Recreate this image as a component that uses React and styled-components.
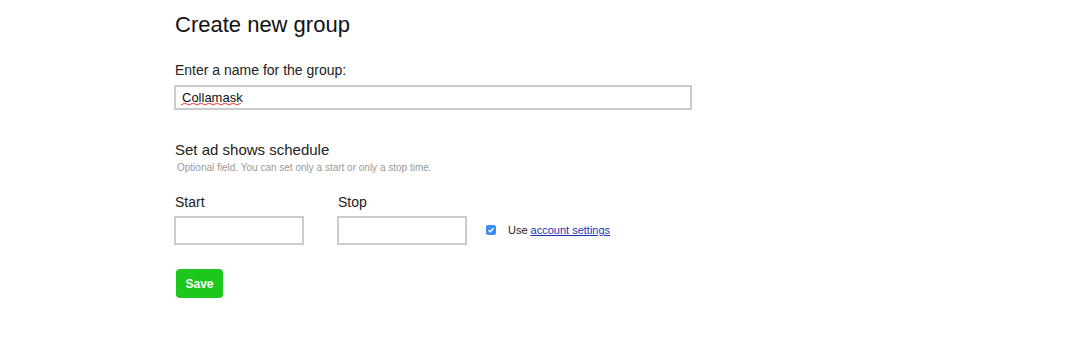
import React from "react";
import styled, { createGlobalStyle } from "styled-components";

const GlobalStyle = createGlobalStyle`
    body {
        margin: 0;
        background: #fff;
        font-family: "Liberation Sans", Arial, sans-serif;
        color: #222;
    }
`;

const Page = styled.div`
    padding: 13px 0 0 175px;
    width: 1080px;
    height: 343px;
    box-sizing: border-box;
`;

const Title = styled.h1`
    margin: 0;
    font-size: 22px;
    line-height: 24px;
    font-weight: normal;
    color: #111;
`;

const Label = styled.label`
    display: block;
    font-size: ${props => props.size || 14}px;
    line-height: 16px;
    color: #222;
`;

const NameField = styled.div`
    margin-top: 25px;
    display: flex;
    flex-direction: column;
    gap: 7px;
`;

const InputWrap = styled.div`
    position: relative;
    width: fit-content;
`;

const TextInput = styled.input`
    box-sizing: border-box;
    width: ${props => props.width}px;
    height: ${props => props.height}px;
    margin-left: -1px;
    border: 2px solid #cbcbcb;
    padding: 0 6px;
    font-family: "Liberation Sans", Arial, sans-serif;
    font-size: 13px;
    color: #111;
    outline: none;
`;

const SpellMark = styled.svg`
    position: absolute;
    left: 6px;
    top: 18px;
    pointer-events: none;
`;

const Section = styled.div`
    margin-top: 32px;
`;

const Hint = styled.div`
    margin: 4px 0 0 2px;
    font-size: 10px;
    color: #999;
`;

const TimeRow = styled.div`
    margin-top: 21px;
    display: flex;
    align-items: flex-end;
    gap: 34px;
`;

const TimeField = styled.div`
    display: flex;
    flex-direction: column;
    gap: 6px;
`;

const CheckRow = styled.label`
    display: flex;
    align-items: center;
    gap: 12px;
    margin: 0 0 9px -15px;
    font-size: 11px;
    color: #222;
`;

const Check = styled.span`
    width: 10px;
    height: 10px;
    border-radius: 2px;
    background: #3a8ff0;
    display: flex;
    align-items: center;
    justify-content: center;
`;

const Link = styled.a`
    color: #1a33b5;
    text-decoration: underline;
    margin-left: 3px;
`;

const SaveButton = styled.button`
    margin-top: 24px;
    margin-left: 1px;
    width: 47px;
    height: 29px;
    border: none;
    border-radius: 4px;
    background: #1dc71d;
    color: #fff;
    font-family: "Liberation Sans", Arial, sans-serif;
    font-weight: bold;
    font-size: 12px;
    cursor: pointer;
`;

const wave = Array.from({ length: 16 }, (_, i) => `${i * 4},${i % 2 ? 0 : 2}`).join(" ");

export default function App() {
    return (
        <>
            <GlobalStyle />
            <Page>
                <Title>Create new group</Title>

                <NameField>
                    <Label>Enter a name for the group:</Label>
                    <InputWrap>
                        <TextInput width={518} height={25} defaultValue="Collamask" />
                        <SpellMark width="62" height="3" viewBox="0 0 62 3">
                            <polyline points={wave} fill="none" stroke="#e33" strokeWidth="1" />
                        </SpellMark>
                    </InputWrap>
                </NameField>

                <Section>
                    <Label size={15}>Set ad shows schedule</Label>
                    <Hint>Optional field. You can set only a start or only a stop time.</Hint>
                </Section>

                <TimeRow>
                    <TimeField>
                        <Label>Start</Label>
                        <TextInput width={130} height={29} />
                    </TimeField>
                    <TimeField>
                        <Label>Stop</Label>
                        <TextInput width={130} height={29} />
                    </TimeField>
                    <CheckRow>
                        <Check>
                            <svg width="8" height="8" viewBox="0 0 8 8">
                                <path d="M1.5 4.2 L3.2 5.8 L6.5 2.2" fill="none" stroke="#fff" strokeWidth="1.5" />
                            </svg>
                        </Check>
                        <span>
                            Use<Link href="#">account settings</Link>
                        </span>
                    </CheckRow>
                </TimeRow>

                <SaveButton>Save</SaveButton>
            </Page>
        </>
    );
}
